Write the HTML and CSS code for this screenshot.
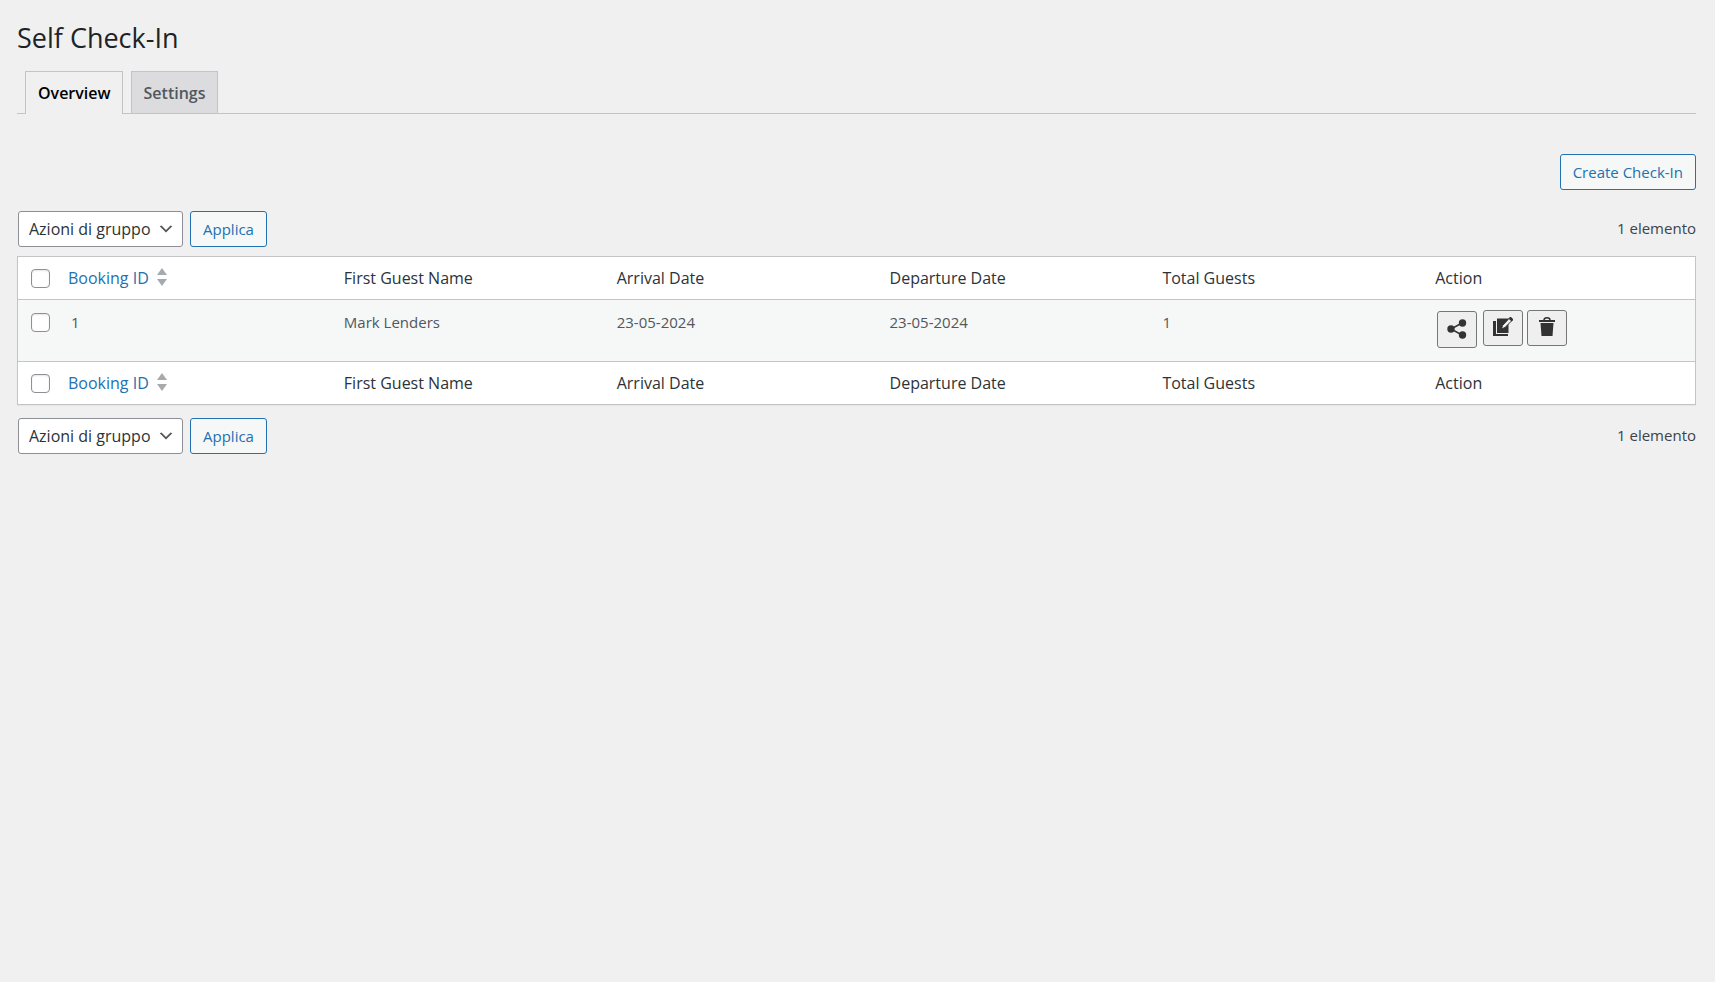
FILE: index.html
```html
<!DOCTYPE html>
<html lang="it">
<head>
<meta charset="utf-8">
<title>Self Check-In</title>
<link rel="stylesheet" href="styles.css">
</head>
<body>
<main class="wrap">
  <h1 class="title">Self Check-In</h1>
  <nav class="tabs">
    <a class="tab tab-active" href="#overview">Overview</a>
    <a class="tab" href="#settings">Settings</a>
  </nav>
  <div class="page-actions">
    <button class="button" type="button">Create Check-In</button>
  </div>
  <div class="tablenav">
    <span class="select-wrap">
      <select class="select" aria-label="Azioni di gruppo"><option>Azioni di gruppo</option></select>
      <svg class="chevron" viewBox="0 0 20 20" aria-hidden="true"><path d="M5 6l5 5 5-5 2 1-7 7-7-7 2-1z"/></svg>
    </span>
    <button class="button" type="button">Applica</button>
    <span class="count">1 elemento</span>
  </div>
  <table class="list">
    <colgroup><col class="col-check"><col class="col-id"><col class="col-data"><col class="col-data"><col class="col-data"><col class="col-data"><col></colgroup>
    <thead>
      <tr>
        <td class="check-cell"><input class="check" type="checkbox" aria-label="Select all"></td>
        <th scope="col"><a class="sort" href="#sort">Booking ID<svg class="arrows" viewBox="0 0 10 18" aria-hidden="true"><path d="M5 0l5 7H0zM0 11h10l-5 7z"/></svg></a></th>
        <th scope="col">First Guest Name</th>
        <th scope="col">Arrival Date</th>
        <th scope="col">Departure Date</th>
        <th scope="col">Total Guests</th>
        <th scope="col">Action</th>
      </tr>
    </thead>
    <tbody>
      <tr>
        <td class="check-cell"><input class="check" type="checkbox" aria-label="Select booking 1"></td>
        <td class="id-cell">1</td>
        <td>Mark Lenders</td>
        <td>23-05-2024</td>
        <td>23-05-2024</td>
        <td>1</td>
        <td class="action-cell">
          <div class="row-actions">
            <button class="icon-button icon-button-share" type="button" aria-label="Share"><svg class="icon" viewBox="0 0 20 20"><path d="M15 4L4 10l11 6" fill="none" stroke="#333" stroke-width="1.500"/><circle cx="15.500" cy="4" r="3.700"/><circle cx="4" cy="10" r="3.700"/><circle cx="15.500" cy="16" r="3.700"/></svg></button>
            <button class="icon-button" type="button" aria-label="Edit"><svg class="icon" viewBox="0 0 20 20"><path d="M0 4h3v13h12v2H0z"/><path d="M4 1.500h11.500v14.500H4z"/><path d="M9.500 8.500l7-7.500 2.500 2.500-7 7-3.500 1.500z" fill="#efefef" stroke="#333"/><path d="M15.500 1.500l1.500-1.500h1l2 2v1l-1.500 1.500z"/></svg></button>
            <button class="icon-button" type="button" aria-label="Delete"><svg class="icon" viewBox="0 0 20 20"><path d="M7 3c0-3 6-3 6 0" fill="none" stroke="#333" stroke-width="1.500"/><path d="M2 3h16v2H2zM3.500 6h13l-1 13h-11z"/></svg></button>
          </div>
        </td>
      </tr>
    </tbody>
    <tfoot>
      <tr>
        <td class="check-cell"><input class="check" type="checkbox" aria-label="Select all"></td>
        <th scope="col"><a class="sort" href="#sort">Booking ID<svg class="arrows" viewBox="0 0 10 18" aria-hidden="true"><path d="M5 0l5 7H0zM0 11h10l-5 7z"/></svg></a></th>
        <th scope="col">First Guest Name</th>
        <th scope="col">Arrival Date</th>
        <th scope="col">Departure Date</th>
        <th scope="col">Total Guests</th>
        <th scope="col">Action</th>
      </tr>
    </tfoot>
  </table>
  <div class="tablenav tablenav-bottom">
    <span class="select-wrap">
      <select class="select" aria-label="Azioni di gruppo"><option>Azioni di gruppo</option></select>
      <svg class="chevron" viewBox="0 0 20 20" aria-hidden="true"><path d="M5 6l5 5 5-5 2 1-7 7-7-7 2-1z"/></svg>
    </span>
    <button class="button" type="button">Applica</button>
    <span class="count">1 elemento</span>
  </div>
</main>
</body>
</html>
```
FILE: styles.css
```css
* { box-sizing: border-box; }

body {
  margin: 0;
  background: #f0f0f0;
  color: #3c434a;
  font-family: "Segoe UI", "Open Sans", "Noto Sans", sans-serif;
  font-size: 15px;
  line-height: 24px;
}

.wrap { padding: 20px 19px 20px 17px; }

.title {
  margin: 0;
  color: #1d2327;
  font-size: 27px;
  font-weight: 400;
  line-height: 36px;
}

.tabs {
  display: flex;
  gap: 8px;
  margin-top: 15px;
  padding-left: 8px;
  border-bottom: 1px solid #c3c4c7;
}

.tab {
  padding: 6px 11px 5px 12px;
  border: 1px solid #c3c4c7;
  border-bottom: 0;
  background: #dcdcde;
  color: #50575e;
  font-size: 16px;
  font-weight: 600;
  line-height: 30px;
  text-decoration: none;
}

.tab-active {
  margin-bottom: -1px;
  padding-bottom: 6px;
  background: #f0f0f0;
  color: #000;
}

.page-actions {
  display: flex;
  justify-content: flex-end;
  margin-top: 40px;
}

.button {
  height: 36px;
  padding: 0 12px;
  border: 1px solid #2271b1;
  border-radius: 3px;
  background: #f6f7f7;
  color: #2271b1;
  font: inherit;
}

.tablenav {
  display: flex;
  align-items: center;
  gap: 7px;
  margin: 21px 0 9px;
  padding-left: 1px;
}

.tablenav-bottom { margin: 13px 0 0; }

.select-wrap {
  position: relative;
  display: flex;
}

.select {
  height: 36px;
  padding: 0 31px 0 10px;
  border: 1px solid #8c8f94;
  border-radius: 3px;
  appearance: none;
  background: #fff;
  color: #2c3338;
  font: inherit;
  font-size: 16px;
}

.chevron {
  position: absolute;
  top: 9px;
  right: 8px;
  width: 18px;
  height: 18px;
  fill: #555;
  pointer-events: none;
}

.count {
  margin-left: auto;
  padding-bottom: 2px;
}

.list {
  width: 100%;
  border: 1px solid #c3c4c7;
  border-spacing: 0;
  background: #fff;
  box-shadow: 0 1px 1px rgba(0, 0, 0, 0.04);
  table-layout: fixed;
}

.col-check { width: 40px; }

.col-id { width: 16.45%; }

.col-data { width: 16.27%; }

.list th,
.list td {
  padding: 9px 10px;
  color: #2c3338;
  font-size: 16px;
  font-weight: 400;
  text-align: left;
  vertical-align: top;
}

.list tbody td {
  height: 63px;
  padding: 10px;
  border-top: 1px solid #c3c4c7;
  border-bottom: 1px solid #c3c4c7;
  background: #f6f7f7;
  color: #50575e;
  font-size: 15px;
}

.list .check-cell { padding: 12px 0 0 13px; }

.list tbody .check-cell { padding: 13px 0 0 13px; }

.list tbody .id-cell { padding-left: 13px; }

.check {
  display: block;
  width: 19px;
  height: 19px;
  margin: 0;
  border: 1px solid #8c8f94;
  border-radius: 4px;
  appearance: none;
  background: #fff;
  box-shadow: inset 0 1px 2px rgba(0, 0, 0, 0.1);
}

.sort {
  display: flex;
  gap: 8px;
  color: #2271b1;
  text-decoration: none;
}

.arrows {
  width: 10px;
  height: 18px;
  margin-top: 2px;
  fill: #a7aaad;
}

.row-actions {
  display: flex;
  gap: 4px;
  padding-left: 2px;
}

.icon-button {
  display: flex;
  align-items: center;
  justify-content: center;
  width: 40px;
  height: 36px;
  padding: 0 0 2px;
  border: 1px solid #767676;
  border-radius: 3px;
  background: #efefef;
}

.icon-button-share {
  height: 37px;
  margin: 1px 2px 0 0;
}

.icon {
  width: 20px;
  height: 20px;
  fill: #333;
}
```
